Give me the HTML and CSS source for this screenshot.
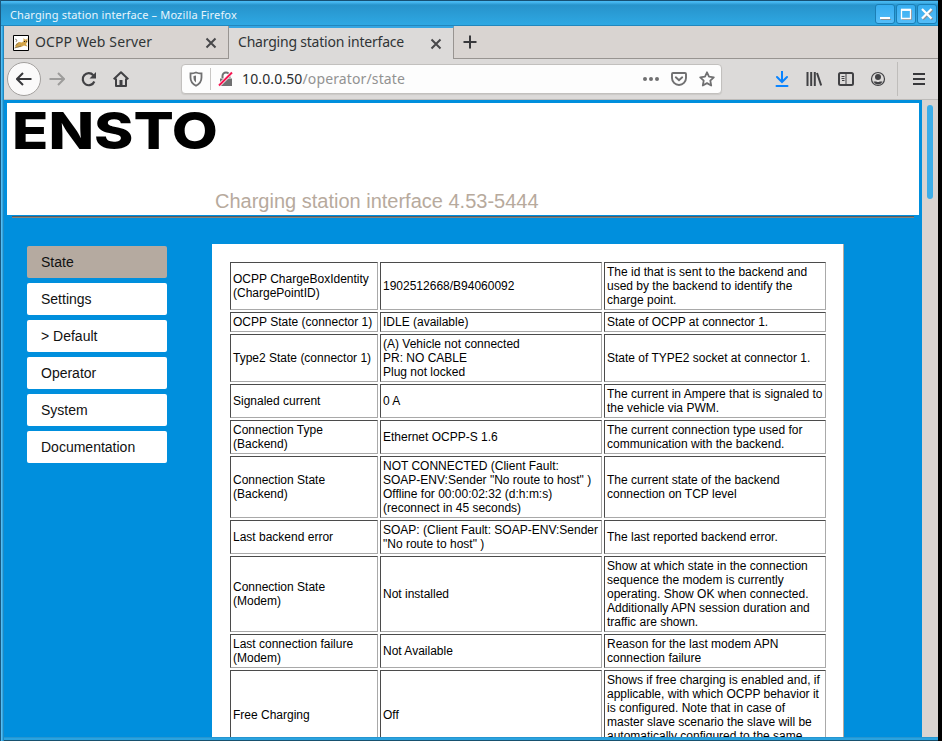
FILE: index.html
```
<!DOCTYPE html>
<html lang="en">
<head>
<meta charset="utf-8">
<title>Charging station interface</title>
<link rel="stylesheet" href="styles.css">
</head>
<body>
<div class="window">
  <header class="titlebar">
    <span class="window-title">Charging station interface – Mozilla Firefox</span>
    <div class="window-buttons">
      <span class="wb"><svg viewBox="0 0 20 20"><path d="M6 15.5h10" stroke="#8a8f94"/><path d="M5 14h10" stroke="#fff" stroke-width="2"/></svg></span>
      <span class="wb"><svg viewBox="0 0 20 20"><path d="M6 15.5h9.5V6" fill="none" stroke="#8a8f94"/><path d="M5.5 6H14.5V14.5H5.5Z" fill="none" stroke="#fff" stroke-width="1.3"/><path d="M5 5.7h10" stroke="#fff" stroke-width="2"/></svg></span>
      <span class="wb"><svg viewBox="0 0 20 20"><path d="M6 6l9.500 9.500M15.500 6L6 15.500" stroke="#8a8f94" stroke-width="2"/><path d="M5 5l9.500 9.500M14.500 5L5 14.500" stroke="#fff" stroke-width="2.200"/></svg></span>
    </div>
  </header>
  <nav class="tabs">
    <div class="tab">
      <svg class="favicon" viewBox="0 0 16 16"><path d="M.5.5h15v15H.5Z" fill="#fff" stroke="#000"/><path d="M3 9l3-2 3 .5 1.500-1.500V3l1.500 1.500h1.500L14.500 3v4L13 9l1.500 2.500-2-.5-1.500-.5-3 1.500-4 .5L2 13Z" fill="#d3a448"/><path d="M1.500 13l3.500-1 3-1M2 4l2 1-1 2M2.500 10.500l3-2.500" fill="none" stroke="#6d6656" stroke-width=".7"/><path d="M11 6.500h1M13 6.500h.7" stroke="#222"/></svg>
      <span class="tab-label first">OCPP Web Server</span>
      <svg class="close" viewBox="0 0 12 12"><path d="M1.500 1.500l9 9M10.500 1.500l-9 9"/></svg>
    </div>
    <div class="tab active">
      <span class="tab-label">Charging station interface</span>
      <svg class="close" viewBox="0 0 12 12"><path d="M1.500 1.500l9 9M10.500 1.500l-9 9"/></svg>
    </div>
    <div class="tab-rest"><svg class="plus" viewBox="0 0 14 14"><path d="M7 .5v13M.5 7h13"/></svg></div>
  </nav>
  <div class="toolbar">
    <span class="back"><svg class="ic" viewBox="0 0 16 16"><path d="M15.500 8H1.500M7 2L1 8l6 6" fill="none" stroke="#38383b" stroke-width="2"/></svg></span>
    <svg class="ic fwd" viewBox="0 0 16 16"><path d="M.5 8H14.500M9 2l6 6-6 6" fill="none" stroke="#9d9c9b" stroke-width="2"/></svg>
    <svg class="ic reload" viewBox="0 0 16 16"><path d="M13.300 10.500A6 6 0 1 1 12.300 4.300" fill="none" stroke="#414144" stroke-width="2.200"/><path d="M15 1v6.500H8.500Z" fill="#414144"/></svg>
    <svg class="ic home" viewBox="0 0 16 16"><path d="M.7 8.300L8 1.300l7.300 7M3 7.500V15h10V7.500" fill="none" stroke="#414144" stroke-width="2" stroke-linejoin="round"/><path d="M6.500 9h3v6h-3Z" fill="#414144"/></svg>
    <div class="urlbar">
      <svg class="ic shield" viewBox="0 0 16 16"><path d="M8 1.500c2 .8 4 1 5.500 1v4c0 4-2 6.500-5.500 8.200C4.500 13 2.500 10.500 2.500 6.500v-4c1.500 0 3.500-.2 5.500-1Z" fill="none" stroke="#707071" stroke-width="1.800"/><path d="M8 4.500v7C6 10 5.500 8.500 5.500 6.500V5Z" fill="#707071"/></svg>
      <span class="divider"></span>
      <svg class="ic lock" viewBox="0 0 16 16"><path d="M4.500 7V5a3.500 3.500 0 0 1 7 0v2" fill="none" stroke="#707071" stroke-width="2"/><path d="M2 7.500h12V15H2Z" fill="#707071"/><path d="M1 14.500L14 1.500" stroke="#fdfdfd" stroke-width="3.400"/><path d="M1 14.500L14 1.500" stroke="#f51551" stroke-width="2"/></svg>
      <span class="url"><span class="host">10.0.0.50</span>/operator/state</span>
      <svg class="ic dots" viewBox="0 0 16 16"><g fill="#707071"><circle cx="2" cy="8" r="2"/><circle cx="8" cy="8" r="2"/><circle cx="14" cy="8" r="2"/></g></svg>
      <svg class="ic pocket" viewBox="0 0 16 16"><path d="M2 2h12q1 0 1 1v4a7 7 0 0 1-14 0V3q0-1 1-1Z" fill="none" stroke="#707071" stroke-width="1.900"/><path d="M4.800 6.300L8 9.300l3.200-3" fill="none" stroke="#707071" stroke-width="1.900" stroke-linecap="round"/></svg>
      <svg class="ic star" viewBox="0 0 16 16"><path d="M8 1.300l2 4.400 4.800.6-3.500 3.300.9 4.900L8 12.100l-4.200 2.400.9-4.900L1.200 6.300 6 5.700Z" fill="none" stroke="#707071" stroke-width="1.800" stroke-linejoin="round"/></svg>
    </div>
    <svg class="ic download" viewBox="0 0 16 16"><path d="M8 0v10.500M3 6l5 5 5-5M2.500 15h11" fill="none" stroke="#0a84ff" stroke-width="2" stroke-linecap="round"/></svg>
    <svg class="ic library" viewBox="0 0 16 16"><path d="M1.500 1v14M5.200 1v14M8.800 1v14M11 2l4.200 12.500" fill="none" stroke="#414144" stroke-width="2"/></svg>
    <svg class="ic sidebar" viewBox="0 0 16 16"><rect x="1" y="2" width="14" height="12" rx="1.500" fill="none" stroke="#414144" stroke-width="2"/><path d="M8 2v12" stroke="#414144"/><path d="M3.500 5.500h3M3.500 7.500h3M4 9.500h2.500" stroke="#414144"/></svg>
    <svg class="ic account" viewBox="0 0 16 16"><circle cx="8" cy="8" r="6.500" fill="none" stroke="#414144" stroke-width="1.200"/><circle cx="8" cy="6" r="3" fill="#414144"/><path d="M3.500 10.500h2.700q1.800 1 3.600 0h2.700q-1.500 3-4.500 3t-4.500-3Z" fill="#414144"/></svg>
    <span class="divider tall"></span>
    <svg class="ic menu" viewBox="0 0 16 16"><path d="M2 3h12M2 8h12M2 13h12" stroke="#38383b" stroke-width="2"/></svg>
  </div>
  <div class="viewport">
    <main class="page">
      <div class="banner">
        <svg class="logo" viewBox="0 0 206 52"><text x="-3" y="41.500" textLength="206" lengthAdjust="spacingAndGlyphs">ENSTO</text></svg>
        <h1>Charging station interface 4.53-5444</h1>
      </div>
      <div class="rule"></div>
      <div class="columns">
        <ul class="menu-list">
          <li class="current">State</li>
          <li>Settings</li>
          <li>&gt; Default</li>
          <li>Operator</li>
          <li>System</li>
          <li>Documentation</li>
        </ul>
        <section class="panel">
          <table>
            <colgroup><col class="c1"><col class="c2"><col class="c2"></colgroup>
            <tr class="l3"><td>OCPP ChargeBoxIdentity<br>(ChargePointID)</td><td>1902512668/B94060092</td><td>The id that is sent to the backend and<br>used by the backend to identify the<br>charge point.</td></tr>
            <tr class="l1"><td>OCPP State (connector 1)</td><td>IDLE (available)</td><td>State of OCPP at connector 1.</td></tr>
            <tr class="l3"><td>Type2 State (connector 1)</td><td>(A) Vehicle not connected<br>PR: NO CABLE<br>Plug not locked</td><td>State of TYPE2 socket at connector 1.</td></tr>
            <tr class="l2"><td>Signaled current</td><td>0 A</td><td>The current in Ampere that is signaled to<br>the vehicle via PWM.</td></tr>
            <tr class="l2"><td>Connection Type<br>(Backend)</td><td>Ethernet OCPP-S 1.6</td><td>The current connection type used for<br>communication with the backend.</td></tr>
            <tr class="l4"><td>Connection State<br>(Backend)</td><td>NOT CONNECTED (Client Fault:<br>SOAP-ENV:Sender "No route to host" )<br>Offline for 00:00:02:32 (d:h:m:s)<br>(reconnect in 45 seconds)</td><td>The current state of the backend<br>connection on TCP level</td></tr>
            <tr class="l2"><td>Last backend error</td><td>SOAP: (Client Fault: SOAP-ENV:Sender<br>"No route to host" )</td><td>The last reported backend error.</td></tr>
            <tr class="l5"><td>Connection State<br>(Modem)</td><td>Not installed</td><td>Show at which state in the connection<br>sequence the modem is currently<br>operating. Show OK when connected.<br>Additionally APN session duration and<br>traffic are shown.</td></tr>
            <tr class="l2"><td>Last connection failure<br>(Modem)</td><td>Not Available</td><td>Reason for the last modem APN<br>connection failure</td></tr>
            <tr class="l6"><td>Free Charging</td><td>Off</td><td class="top">Shows if free charging is enabled and, if<br>applicable, with which OCPP behavior it<br>is configured. Note that in case of<br>master slave scenario the slave will be<br>automatically configured to the same</td></tr>
          </table>
        </section>
      </div>
    </main>
    <div class="scrollbar"><div class="thumb"></div></div>
  </div>
</div>
</body>
</html>
```
FILE: styles.css
```
* { box-sizing: border-box; }
html, body { margin: 0; height: 741px; overflow: hidden; background: #000; }
svg { display: block; flex: none; }

.window {
  width: 938px; height: 741px; padding: 0 0 4px 4px; overflow: hidden;
  display: flex; flex-direction: column;
  background: linear-gradient(90deg, #1c5a80 0 1px, #55bdf3 1px 2px, #33a9e4 2px 3px, #2189c2 3px 4px, transparent 4px),
    linear-gradient(#2189c2 737px, #2ba3df 738px 740px, #17516f 740px);
  font-family: "Noto Sans", sans-serif;
}

.titlebar {
  height: 26px; flex: none; margin-left: -3px; padding-left: 9px;
  display: flex; align-items: center; justify-content: space-between;
  background: linear-gradient(#174f72 0 1px, #48b9f2 1px 2px, #2793cb 5px, #2ea8e3 25px, #2187bd 25px);
}
.window-title { color: #e8f5fc; font-size: 11px; letter-spacing: .15px; padding-top: 2px; }
.window-buttons { display: flex; gap: 1px; padding: 1px 1px 0 0; }
.wb {
  width: 20px; height: 20px; border: 1px solid #1b7eb5; border-radius: 3px;
  background: linear-gradient(#36adf0, #55bdf8);
}
.wb svg { width: 20px; height: 20px; margin: -1px; }

.tabs { height: 33px; flex: none; display: flex; background: #d9d4d1; }
.tab {
  width: 225px; display: flex; align-items: center; padding: 1px 12px 0 9px;
  border-right: 1px solid #989491; border-bottom: 1px solid #989491;
}
.tab.active { background: #dcdad9; border-bottom: 0; border-top: 2px solid #35a5e2; padding: 0 12px 1px 9px; }
.tab-label { flex: 1; font-size: 14px; line-height: 20px; color: #303436; white-space: nowrap; margin-top: -2px; letter-spacing: -.21px; }
.tab-label.first { letter-spacing: .12px; }
.favicon { width: 16px; height: 16px; margin-right: 6px; }
.close { width: 12px; height: 12px; stroke: #48484a; stroke-width: 2; fill: none; margin: 1px -1px 0 0; }
.tab-rest { flex: 1; border-bottom: 1px solid #989491; padding: 9px 0 0 9px; }
.plus { width: 14px; height: 14px; stroke: #38383b; stroke-width: 2; }

.toolbar {
  height: 41px; flex: none; display: flex; align-items: center;
  background: #dcdad9; border-bottom: 1px solid #bdbbb9; padding-left: 3px;
}
.ic { width: 16px; height: 16px; }
.back {
  width: 34px; height: 34px; border-radius: 50%; border: 1px solid #a3a09e; background: #fbfafa;
  display: flex; align-items: center; justify-content: center;
}
.fwd { margin-left: 8px; }
.reload { margin-left: 16px; }
.home { margin-left: 16px; }
.urlbar {
  width: 541px; height: 30px; margin-left: 52px; border: 1px solid #c2c0be; border-radius: 4px;
  background: #fdfdfd; display: flex; align-items: center; box-shadow: 0 1px 1px #cbc9c7;
}
.shield { margin-left: 6px; }
.divider { width: 1px; height: 22px; background: #c8c6c4; margin: 0 7px 0 6px; }
.url { flex: 1; font-size: 14px; line-height: 20px; color: #929292; margin-left: 8px; letter-spacing: .13px; }
.host { color: #2a2c2e; }
.dots, .pocket { margin-right: 12px; }
.star { margin-right: 6px; }
.download { margin-left: 52px; }
.library, .sidebar, .account { margin-left: 16px; }
.divider.tall { height: 34px; margin: 0 13px 0 11px; background: #bfbdbb; }

.viewport { flex: 1; min-height: 0; display: flex; overflow: hidden; }
.page { width: 918px; padding: 3px; background: #008fdd; font-family: "Liberation Sans", sans-serif; }
.banner { height: 112px; background: #fff; padding: 4px 8px 0; }
.logo { width: 206px; height: 52px; overflow: visible; }
.logo text { font: 800 51px Inter, sans-serif; fill: #000; }
h1 { margin: 29px 0 0 200px; font-size: 20px; line-height: 26px; font-weight: 400; color: #b7aa9d; white-space: nowrap; }
.rule { margin: 1px 5px 0; height: 2px; background: linear-gradient(#4c5a65 50%, #8b8176 50%); }
.columns { display: flex; margin-top: 26px; align-items: flex-start; }
.menu-list { list-style: none; margin: 2px 45px 0 20px; padding: 0; width: 140px; display: grid; gap: 5px; }
.menu-list li { height: 32px; line-height: 32px; padding-left: 14px; font-size: 14px; color: #111; background: #fff; border-radius: 2px; }
.menu-list .current { background: #b5aaa0; }
.panel { width: 632px; height: 600px; background: #fff; border-right: 1px solid #b5aaa0; padding: 16px; }
table { table-layout: fixed; width: 600px; border-collapse: separate; border-spacing: 2px; font-size: 12px; line-height: 14px; color: #000; }
.c1 { width: 148px; }
.c2 { width: 222px; }
td { padding: 2px; border: 1px solid; border-color: #4b4b4b #a9a9a9 #a9a9a9 #4b4b4b; white-space: nowrap; vertical-align: middle; }
.top { vertical-align: top; }
.l1 { height: 20px; }
.l2 { height: 34px; }
.l3 { height: 48px; }
.l4 { height: 62px; }
.l5 { height: 76px; }
.l6 { height: 90px; }

.scrollbar { width: 16px; background: #d9d4d1; padding: 5px 5px 0; }
.thumb { width: 6px; height: 94px; border-radius: 3px; background: #3daee9; }
```
